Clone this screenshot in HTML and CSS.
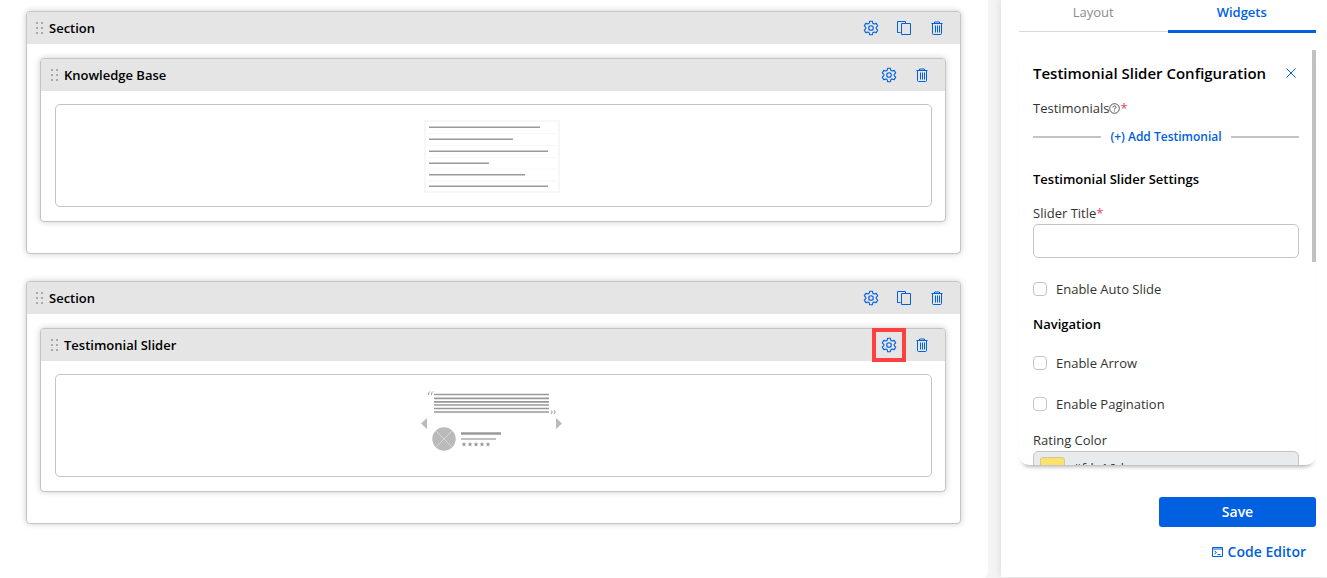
FILE: index.html
```
<!DOCTYPE html>
<html lang="en">

<head>
	<meta charset="utf-8">
	<title>Page Builder</title>
	<link rel="stylesheet" href="styles.css">
</head>

<body>
	<!-- shared icons -->
	<svg class="sprite" aria-hidden="true">
		<symbol id="grip" viewBox="0 0 8 12">
			<g fill="#a9a9a9">
				<rect x="0" y="0" width="2" height="2"/><rect x="5" y="0" width="2" height="2"/>
				<rect x="0" y="5" width="2" height="2"/><rect x="5" y="5" width="2" height="2"/>
				<rect x="0" y="10" width="2" height="2"/><rect x="5" y="10" width="2" height="2"/>
			</g>
		</symbol>
		<symbol id="gear" viewBox="0 0 16 16">
			<g fill="none" stroke="currentColor" stroke-width="1.1" stroke-linejoin="round">
				<path d="M6.700 1.200h2.600l.5 2 1.300.8 2.100-.6 1.500 2.400-1.500 1.500v1.400l1.500 1.500-1.500 2.400-2.100-.6-1.300.8-.5 2H6.700l-.5-2-1.300-.8-2.100.6-1.500-2.400 1.500-1.500V7.300L1.300 5.800l1.500-2.400 2.100.6 1.300-.8z"/>
				<circle cx="8" cy="8" r="2.300"/>
			</g>
		</symbol>
		<symbol id="copy" viewBox="0 0 16 16">
			<path d="M4.500 12.500h-3v-11h8v2M5.500 3.500h9v11h-9z" fill="none" stroke="currentColor"/>
		</symbol>
		<symbol id="trash" viewBox="0 0 16 16">
			<path d="M2.500 3.500h11M5.500 3.500v-1.500h5v1.500M3.500 3.500v10q0 1 1 1h7q1 0 1-1v-10M6.500 5.500v7M8.500 5.500v7M10.500 5.500v7" fill="none" stroke="currentColor"/>
		</symbol>
	</svg>

	<main class="canvas">
		<section class="section">
			<header class="bar">
				<svg class="grip"><use href="#grip"/></svg>
				<h2>Section</h2>
				<button class="icon" aria-label="Section settings"><svg><use href="#gear"/></svg></button>
				<button class="icon" aria-label="Duplicate section"><svg><use href="#copy"/></svg></button>
				<button class="icon" aria-label="Delete section"><svg><use href="#trash"/></svg></button>
			</header>
			<article class="widget">
				<header class="bar">
					<svg class="grip"><use href="#grip"/></svg>
					<h3>Knowledge Base</h3>
					<button class="icon" aria-label="Widget settings"><svg><use href="#gear"/></svg></button>
					<button class="icon" aria-label="Delete widget"><svg><use href="#trash"/></svg></button>
				</header>
				<div class="preview">
					<svg width="142" height="76" viewBox="0 0 142 76">
						<rect x="2" y="3" width="134" height="71" fill="none" stroke="#f5f5f5" stroke-width="1.500"/>
						<path d="M5 15.500h128M5 27.500h128M5 39.500h128M5 51h128M5 63h128" stroke="#f8f8f8"/>
						<path d="M6 9.200h111M6 21.200h84M6 33.200h119M6 45.200h60M6 56.700h96M6 68.200h119" stroke="#999" stroke-width="1.600"/>
					</svg>
				</div>
			</article>
		</section>

		<section class="section">
			<header class="bar">
				<svg class="grip"><use href="#grip"/></svg>
				<h2>Section</h2>
				<button class="icon" aria-label="Section settings"><svg><use href="#gear"/></svg></button>
				<button class="icon" aria-label="Duplicate section"><svg><use href="#copy"/></svg></button>
				<button class="icon" aria-label="Delete section"><svg><use href="#trash"/></svg></button>
			</header>
			<article class="widget">
				<header class="bar">
					<svg class="grip"><use href="#grip"/></svg>
					<h3>Testimonial Slider</h3>
					<button class="icon marked" aria-label="Widget settings"><svg><use href="#gear"/></svg></button>
					<button class="icon" aria-label="Delete widget"><svg><use href="#trash"/></svg></button>
				</header>
				<div class="preview">
					<svg width="146" height="74" viewBox="0 0 146 74">
						<path d="M13 5.500h115M13 9.300h115M13 12.800h115M13 16h115M13 19.500h115M13 23h115" stroke="#999" stroke-width="1.700"/>
						<g fill="none" stroke="#999">
							<path d="M9 2.500q-1.500.5-1.500 3.500M12 2.500q-1.500.5-1.500 3.500"/>
							<path d="M130.500 21.500q1.500 1.500-.5 3.500M133.500 21.500q1.500 1.500-.5 3.500"/>
						</g>
						<path d="M6 29v11l-6-5.500zM135 29v11l6-5.500z" fill="#bababa"/>
						<circle cx="23" cy="50" r="11.700" fill="#bababa"/>
						<path d="M15 42l16 16M31 42l-16 16" stroke="#d6d6d6"/>
						<path d="M40 44.500h40" stroke="#999" stroke-width="2.500"/>
						<path d="M40 50h35" stroke="#aaa" stroke-width="1.700"/>
						<g fill="#999">
							<path id="star" d="M43 53l.7 1.500 1.600.1-1.200 1.100.4 1.700-1.500-.9-1.500.9.4-1.700-1.200-1.100 1.600-.1z"/>
							<use href="#star" x="6"/><use href="#star" x="12"/><use href="#star" x="18"/><use href="#star" x="24"/>
						</g>
					</svg>
				</div>
			</article>
		</section>
	</main>

	<aside class="sidebar">
		<nav class="tabs">
			<a href="#layout">Layout</a>
			<a href="#widgets" class="active">Widgets</a>
		</nav>

		<form class="panel">
			<div class="panelBody">
				<div class="titleRow">
					<h2>Testimonial Slider Configuration</h2>
					<button type="button" class="close" aria-label="Close">
						<svg width="10" height="10" viewBox="0 0 10 10"><path d="M.5.5l9 9M9.500.5l-9 9" fill="none" stroke="currentColor"/></svg>
					</button>
				</div>

				<p class="fieldName">Testimonials<svg class="help" viewBox="0 0 11 11"><circle cx="5.500" cy="5.500" r="4.800"/><path d="M4 4.500q0-1.500 1.500-1.500t1.500 1.300q0 .8-1.500 1.500v.7M5.500 7.500v1"/></svg><span class="required">*</span></p>
				<button type="button" class="add">(+) Add Testimonial</button>

				<h3 class="settings">Testimonial Slider Settings</h3>
				<label for="sliderTitle">Slider Title<span class="required">*</span></label>
				<input type="text" id="sliderTitle" name="sliderTitle">

				<div class="check">
					<input type="checkbox" id="autoSlide" name="autoSlide">
					<label for="autoSlide">Enable Auto Slide</label>
				</div>

				<h3 class="navigation">Navigation</h3>
				<div class="check">
					<input type="checkbox" id="arrow" name="arrow">
					<label for="arrow">Enable Arrow</label>
				</div>
				<div class="check">
					<input type="checkbox" id="pagination" name="pagination">
					<label for="pagination">Enable Pagination</label>
				</div>

				<label for="ratingColor" class="colorLabel">Rating Color</label>
				<div class="color">
					<span class="swatch"></span>
					<input type="text" id="ratingColor" name="ratingColor" value="#fde16d" readonly>
				</div>
			</div>
			<span class="thumb"></span>
		</form>

		<button type="button" class="save">Save</button>
		<a href="#code" class="code">
			<svg width="11" height="10" viewBox="0 0 11 10"><path d="M.5.5h10v9H.5zM.5 2h10M2.500 4l2 1.500-2 1.500M5.500 7.500h3" fill="none" stroke="currentColor"/></svg>
			Code Editor
		</a>
	</aside>
</body>

</html>
```

FILE: styles.css
```
:root {
	--blue: #0060e0;
	--border: #c4c4c4;
	--barColor: #e5e5e5;
	--textColor: #333;
	--required: #e0455a;
}

* {
	box-sizing: border-box;
}

body {
	display: flex;
	gap: 13px;
	min-height: 100vh;
	margin: 0;
	background: #f4f4f4;
	color: var(--textColor);
	font-family: "Open Sans", "Noto Sans", sans-serif;
	font-size: 13px;
	line-height: 20px;
}

h2, h3, p {
	margin: 0;
	font-size: 13px;
}

h2, h3 {
	color: #000;
	font-weight: 600;
}

button {
	padding: 0;
	border: 0;
	background: none;
	color: var(--blue);
	font: inherit;
	cursor: pointer;
}

a {
	color: var(--blue);
	text-decoration: none;
}

.sprite {
	display: none;
}

/* canvas */

.canvas {
	display: flex;
	flex: 1;
	flex-direction: column;
	gap: 27px;
	padding: 11px 27px 27px 26px;
	border-radius: 0 0 6px 0;
	background: #fff;
}

.section, .widget {
	border: 1px solid var(--border);
	border-radius: 4px;
	background: #fff;
	box-shadow: 0 0 6px rgba(0, 0, 0, 0.2);
}

.section {
	padding-bottom: 31px;
}

.widget {
	margin: 14px 14px 0 13px;
}

.bar {
	display: flex;
	align-items: center;
	gap: 17px;
	height: 32px;
	padding: 0 15px 0 10px;
	border-radius: 3px 3px 0 0;
	background: var(--barColor);
}

.section > .bar {
	padding-left: 9px;
}

.bar h2, .bar h3 {
	flex: 1;
	margin-left: -12px;
}

.grip {
	width: 8px;
	height: 12px;
}

.icon {
	display: flex;
	width: 16px;
	height: 16px;
}

.icon svg {
	width: 16px;
	height: 16px;
}

.marked {
	outline: 4px solid #ff4040;
	outline-offset: 5px;
}

.preview {
	display: flex;
	align-items: center;
	justify-content: center;
	height: 103px;
	margin: 13px 13px 14px 14px;
	border: 1px solid var(--border);
	border-radius: 5px;
}

/* sidebar */

.sidebar {
	display: flex;
	flex-direction: column;
	width: 326px;
	height: calc(100vh - 1px);
	padding: 2px 11px 15px 18px;
	background: #fff;
	box-shadow: 0 0 8px rgba(0, 0, 0, 0.12);
}

.tabs {
	display: flex;
	align-items: flex-start;
	margin-bottom: 16px;
	text-align: center;
}

.tabs a {
	flex: 1;
	padding-bottom: 9px;
	border-bottom: 1px solid #d8d8d8;
	color: #8c8c8c;
}

.tabs .active {
	padding-bottom: 8px;
	border-bottom: 3px solid var(--blue);
	color: var(--blue);
	font-weight: 600;
}

.panel {
	position: relative;
	flex: 1;
	min-height: 0;
	border-radius: 2px 2px 10px 10px;
	box-shadow: 0 5px 5px -4px rgba(0, 0, 0, 0.4);
	overflow: hidden;
}

.panelBody {
	height: 100%;
	padding: 14px 17px 14px 14px;
	overflow-y: auto;
	scrollbar-width: none;
}

.thumb {
	position: absolute;
	top: 1px;
	right: 0;
	width: 4px;
	height: 51%;
	background: #c1c1c1;
}

.titleRow {
	display: flex;
	align-items: center;
	justify-content: space-between;
	padding-right: 3px;
}

.titleRow h2 {
	font-size: 15px;
	white-space: nowrap;
}

.close {
	display: flex;
}

.panel label, .fieldName {
	display: block;
}

.fieldName {
	margin-top: 15px;
}

.help {
	width: 11px;
	height: 11px;
	vertical-align: -1px;
	fill: none;
	stroke: #444;
	stroke-width: 0.9;
}

.required {
	color: var(--required);
}

.add {
	display: flex;
	align-items: center;
	gap: 9px;
	width: 100%;
	margin-top: 9px;
	font-size: 12px;
	font-weight: 600;
	white-space: nowrap;
}

.add::before, .add::after {
	content: "";
	flex: 1;
	height: 2px;
	background: var(--border);
}

.settings {
	margin: 22px 0 14px;
}

.navigation {
	margin: 15px 0 19px;
}

input[type="text"] {
	display: block;
	width: 100%;
	height: 34px;
	margin: 1px 0 21px;
	padding: 0 8px;
	border: 1px solid var(--border);
	border-radius: 5px;
	background: #fff;
	color: var(--textColor);
	font: inherit;
}

.check {
	display: flex;
	align-items: center;
	gap: 9px;
}

.check + .check {
	margin-top: 21px;
}

.check input {
	appearance: none;
	width: 14px;
	height: 14px;
	margin: 0;
	border: 1px solid var(--border);
	border-radius: 4px;
	background: #fff;
}

.panel .colorLabel {
	margin-top: 16px;
}

.color {
	display: flex;
	align-items: center;
	height: 34px;
	margin-top: 1px;
	padding-left: 6px;
	border: 1px solid var(--border);
	border-radius: 5px;
	background: #e8ebee;
}

.color input[type="text"] {
	flex: 1;
	margin: 0;
	height: 32px;
	border: 0;
	background: none;
}

.swatch {
	width: 25px;
	height: 22px;
	border: 1px solid #d0c8a0;
	border-radius: 3px;
	background: #fde16d;
}

.save {
	align-self: flex-end;
	width: 157px;
	height: 30px;
	margin: 32px 0 15px;
	border-radius: 3px;
	background: var(--blue);
	color: #fff;
	font-size: 14px;
	font-weight: 600;
}

.code {
	display: flex;
	align-items: center;
	align-self: flex-end;
	gap: 5px;
	padding-right: 10px;
	font-size: 14px;
	font-weight: 600;
}
```
